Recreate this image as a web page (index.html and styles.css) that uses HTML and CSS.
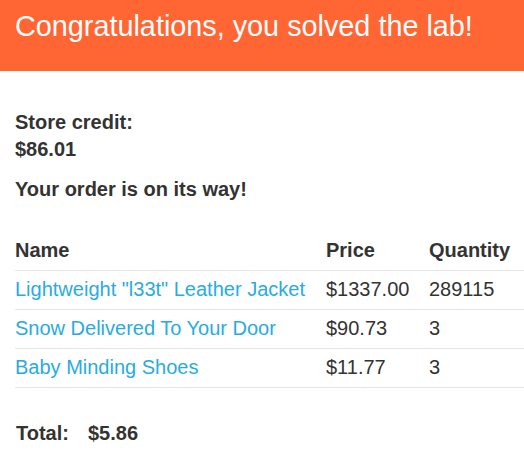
FILE: index.html
```html
<!DOCTYPE html>
<html>
<head>
<meta charset="utf-8">
<link rel="stylesheet" href="styles.css">
</head>
<body>
<header class="banner">
  <h4 class="banner-title">Congratulations, you solved the lab!</h4>
</header>
<main class="content">
  <p class="credit"><strong>Store credit:<br>$86.01</strong></p>
  <p class="status"><strong>Your order is on its way!</strong></p>
  <table class="order">
    <colgroup>
      <col class="col-name">
      <col class="col-price">
      <col class="col-qty">
    </colgroup>
    <thead>
      <tr><th>Name</th><th>Price</th><th>Quantity</th></tr>
    </thead>
    <tbody>
      <tr><td><a href="#">Lightweight "l33t" Leather Jacket</a></td><td>$1337.00</td><td>289115</td></tr>
      <tr><td><a href="#">Snow Delivered To Your Door</a></td><td>$90.73</td><td>3</td></tr>
      <tr><td><a href="#">Baby Minding Shoes</a></td><td>$11.77</td><td>3</td></tr>
    </tbody>
  </table>
  <div class="total">
    <span>Total:</span>
    <span>$5.86</span>
  </div>
</main>
</body>
</html>
```
FILE: styles.css
```css
html, body {
  margin: 0;
  padding: 0;
  background: #ffffff;
}
body {
  font-family: "Liberation Sans", Arial, sans-serif;
  font-size: 20px;
  color: #333332;
  overflow: hidden;
}
.banner {
  background: #ff6633;
  height: 71px;
  box-sizing: border-box;
  padding: 10px 15px 0;
}
.banner-title {
  margin: 0;
  font-size: 28.8px;
  font-weight: normal;
  line-height: 32px;
  color: #ffffff;
}
.content {
  padding: 38px 0 0 15px;
}
.credit {
  margin: 0;
  line-height: 27px;
}
.status {
  margin: 13px 0 0;
  line-height: 27px;
}
.order {
  margin-top: 29px;
  width: 509px;
  border-collapse: collapse;
  table-layout: fixed;
}
.col-name { width: 311px; }
.col-price { width: 103px; }
.col-qty { width: 95px; }
.order th,
.order td {
  text-align: left;
  padding: 7px 0 9px;
  line-height: 22px;
  white-space: nowrap;
}
.order th {
  font-weight: bold;
  border-bottom: 1px solid #e6e6e6;
}
.order td {
  border-bottom: 1px solid #e6e6e6;
}
.order a {
  color: #29abe2;
  text-decoration: none;
}
.total {
  margin-top: 32px;
  display: flex;
  gap: 19px;
  font-weight: bold;
  line-height: 27px;
  padding-left: 1px;
}
```
